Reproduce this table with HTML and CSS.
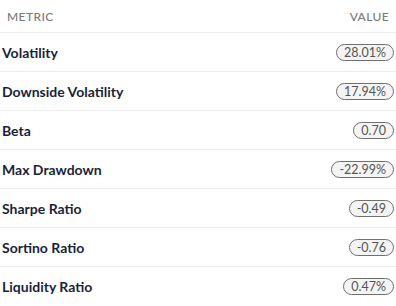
FILE: index.html
```html
<!DOCTYPE html>
<html>
<head>
<meta charset="utf-8">
<link rel="stylesheet" href="styles.css">
</head>
<body>
<div class="table">
  <div class="head">
    <span>Metric</span>
    <span>Value</span>
  </div>
  <div class="row"><span class="name">Volatility</span><span class="badge">28.01%</span></div>
  <div class="row"><span class="name">Downside Volatility</span><span class="badge">17.94%</span></div>
  <div class="row"><span class="name">Beta</span><span class="badge">0.70</span></div>
  <div class="row"><span class="name">Max Drawdown</span><span class="badge">-22.99%</span></div>
  <div class="row"><span class="name">Sharpe Ratio</span><span class="badge">-0.49</span></div>
  <div class="row"><span class="name">Sortino Ratio</span><span class="badge">-0.76</span></div>
  <div class="row"><span class="name">Liquidity Ratio</span><span class="badge">0.47%</span></div>
</div>
</body>
</html>
```
FILE: styles.css
```css
html, body {
  margin: 0;
  padding: 0;
  background: #ffffff;
}
body {
  font-family: Lato, "Open Sans", sans-serif;
  width: 396px;
}
.table {
  display: flex;
  flex-direction: column;
}
.head {
  height: 32px;
  display: flex;
  align-items: center;
  justify-content: space-between;
  padding: 0 7px;
  border-bottom: 1px solid #ececec;
  font-size: 12px;
  text-transform: uppercase;
  letter-spacing: 0.4px;
  color: #7a7a7a;
  font-weight: 500;
}
.row {
  height: 38px;
  display: flex;
  align-items: center;
  justify-content: space-between;
  padding: 0 2px;
  border-bottom: 1px solid #ececec;
}
.row:last-child {
  border-bottom: none;
}
.name {
  font-size: 14px;
  font-weight: 700;
  color: #1b1f3b;
}
.badge {
  font-size: 12.5px;
  color: #555;
  background: #f4f4f4;
  border: 1px solid #6f6f6f;
  border-radius: 999px;
  padding: 0 7px;
  height: 15px;
  line-height: 15px;
}
```
